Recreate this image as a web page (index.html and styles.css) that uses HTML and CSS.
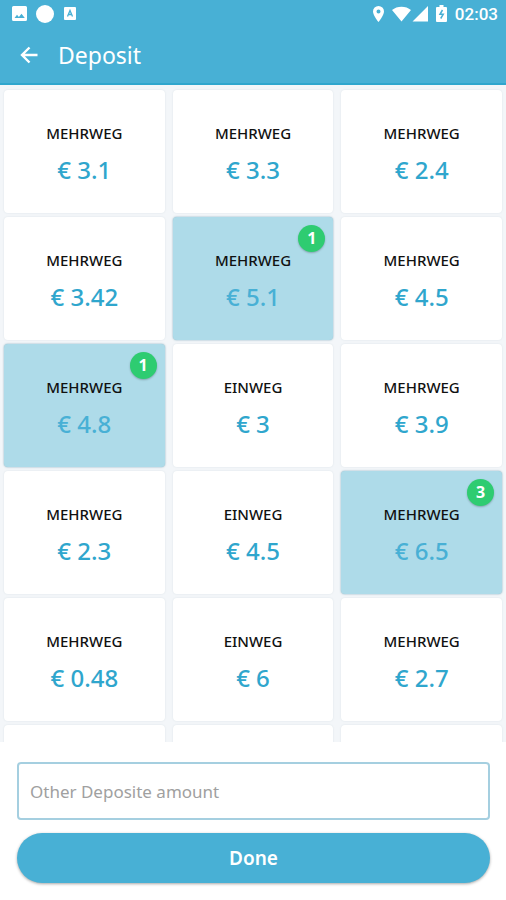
FILE: index.html
```html
<!DOCTYPE html>
<html lang="en">
  <head>
    <meta charset="UTF-8" />
    <meta name="viewport" content="width=device-width, initial-scale=1.0" />
    <title>Deposit</title>
    <link rel="stylesheet" href="styles.css">
  </head>
  <body>
    <header class="top">
      <!-- Phone status bar -->
      <div class="status">
        <div class="status-left">
          <svg width="15" height="15" viewBox="0 0 15 15" aria-hidden="true">
            <path fill="#fff" fill-rule="evenodd" d="M1.500 0h12A1.500 1.500 0 0 1 15 1.500v12a1.500 1.500 0 0 1-1.500 1.500h-12A1.500 1.500 0 0 1 0 13.500v-12A1.500 1.500 0 0 1 1.500 0zM2.500 12h10.300L9.500 7.700 6.900 10.900 5 8.800z" />
          </svg>
          <svg width="18" height="18" viewBox="0 0 18 18" aria-hidden="true">
            <circle cx="9" cy="9" r="9" fill="#fff" />
          </svg>
          <svg class="app-icon" width="12" height="13" viewBox="0 0 12 13" aria-hidden="true">
            <rect width="12" height="13" rx="1" fill="#fff" />
            <path d="M3.500 9.500 6 3.500l2.500 6M4.500 7.500h3" fill="none" stroke="#48b0d5" stroke-width="1.300" />
          </svg>
        </div>
        <div class="status-right">
          <svg width="11" height="16" viewBox="0 0 11 16" aria-hidden="true">
            <path fill="#fff" fill-rule="evenodd" d="M5.500 0A5.500 5.500 0 0 1 11 5.500C11 9.500 5.500 16 5.500 16S0 9.500 0 5.500A5.500 5.500 0 0 1 5.500 0zm0 3.500a2 2 0 1 0 0 4 2 2 0 0 0 0-4z" />
          </svg>
          <svg width="36" height="16" viewBox="0 0 36 16" aria-hidden="true">
            <path fill="#fff" d="M0 4C5-.5 14-.5 19 4L9.500 15.500zM36 0v15.500H20.500z" />
          </svg>
          <svg width="11" height="17" viewBox="0 0 11 17" aria-hidden="true">
            <path fill="#fff" d="M3.500 0h4v2H10a1 1 0 0 1 1 1v13a1 1 0 0 1-1 1H1a1 1 0 0 1-1-1V3a1 1 0 0 1 1-1h2.500z" />
            <path fill="none" stroke="#48b0d5" stroke-width="1.500" d="M6.500 5 4 9.300h3.200L4.700 13.500" />
          </svg>
          <time>02:03</time>
        </div>
      </div>
      <!-- App bar -->
      <div class="app-bar">
        <button type="button" class="back" aria-label="Back">
          <svg width="18" height="18" viewBox="0 0 18 18" aria-hidden="true">
            <path fill="none" stroke="#fff" stroke-width="2.400" d="M17.500 9H2.500M9.500 1.500 2 9l7.500 7.500" />
          </svg>
        </button>
        <h1>Deposit</h1>
      </div>
    </header>

    <main class="deposits">
      <button type="button" class="card"><span class="kind">MEHRWEG</span><span class="price">€ 3.1</span></button>
      <button type="button" class="card"><span class="kind">MEHRWEG</span><span class="price">€ 3.3</span></button>
      <button type="button" class="card"><span class="kind">MEHRWEG</span><span class="price">€ 2.4</span></button>

      <button type="button" class="card"><span class="kind">MEHRWEG</span><span class="price">€ 3.42</span></button>
      <button type="button" class="card selected"><span class="kind">MEHRWEG</span><span class="price">€ 5.1</span><span class="badge">1</span></button>
      <button type="button" class="card"><span class="kind">MEHRWEG</span><span class="price">€ 4.5</span></button>

      <button type="button" class="card selected"><span class="kind">MEHRWEG</span><span class="price">€ 4.8</span><span class="badge">1</span></button>
      <button type="button" class="card"><span class="kind">EINWEG</span><span class="price">€ 3</span></button>
      <button type="button" class="card"><span class="kind">MEHRWEG</span><span class="price">€ 3.9</span></button>

      <button type="button" class="card"><span class="kind">MEHRWEG</span><span class="price">€ 2.3</span></button>
      <button type="button" class="card"><span class="kind">EINWEG</span><span class="price">€ 4.5</span></button>
      <button type="button" class="card selected"><span class="kind">MEHRWEG</span><span class="price">€ 6.5</span><span class="badge">3</span></button>

      <button type="button" class="card"><span class="kind">MEHRWEG</span><span class="price">€ 0.48</span></button>
      <button type="button" class="card"><span class="kind">EINWEG</span><span class="price">€ 6</span></button>
      <button type="button" class="card"><span class="kind">MEHRWEG</span><span class="price">€ 2.7</span></button>

      <div class="card"></div>
      <div class="card"></div>
      <div class="card"></div>
    </main>

    <form class="footer" autocomplete="off">
      <input type="text" id="amount" name="amount" aria-label="Other Deposite amount" placeholder="Other Deposite amount" />
      <button type="submit" class="done">Done</button>
    </form>
  </body>
</html>
```
FILE: styles.css
```css
* {
  box-sizing: border-box;
}
body {
  margin: 0;
  height: 100vh;
  display: flex;
  flex-direction: column;
  background: #fff;
  font-family: "Noto Sans", "Open Sans", sans-serif;
}
button,
input {
  font-family: inherit;
}
svg {
  display: block;
}

/* Header */
.top {
  background: #48b0d5;
  color: #fff;
  border-bottom: 2px solid #2fa6cd;
}
.status {
  display: flex;
  justify-content: space-between;
  align-items: center;
  height: 27px;
  padding: 0 8px 0 12px;
}
.status-left,
.status-right {
  display: flex;
  align-items: center;
  gap: 9px;
}
.app-icon {
  margin-left: 1px;
}
.status-right {
  gap: 8px;
}
.status time {
  font-family: Roboto, sans-serif;
  font-size: 17px;
  font-weight: 500;
  line-height: 24px;
}
.app-bar {
  display: flex;
  align-items: center;
  gap: 20px;
  height: 56px;
  padding: 0 20px;
}
.back {
  padding: 0;
  border: none;
  background: none;
  cursor: pointer;
}
.app-bar h1 {
  margin: 0;
  font-size: 23px;
  font-weight: 400;
}

/* Deposit cards */
.deposits {
  flex: 1;
  min-height: 0;
  overflow-y: auto;
  scrollbar-width: none;
  display: grid;
  grid-template-columns: repeat(3, 1fr);
  grid-auto-rows: 123px;
  gap: 4px 8px;
  padding: 5px 4px 0;
  background: #f3f6f9;
}
.card {
  position: relative;
  display: flex;
  flex-direction: column;
  align-items: center;
  justify-content: center;
  gap: 9px;
  padding: 8px 0 0;
  border: none;
  border-radius: 4px;
  background: #fff;
  box-shadow: 0 0 2px rgba(60, 90, 110, 0.12);
}
button.card {
  cursor: pointer;
}
.kind {
  color: #111;
  font-size: 15px;
  font-weight: 500;
  line-height: 20px;
}
.price {
  color: #2fa6cd;
  font-size: 24px;
  font-weight: 500;
  line-height: 36px;
}
.selected {
  background: #aedbe9;
  box-shadow: 0 0 2px rgba(40, 110, 140, 0.6);
}
.selected .price {
  color: #48b0d5;
}
.badge {
  position: absolute;
  top: 8px;
  right: 8px;
  width: 27px;
  height: 27px;
  border-radius: 50%;
  background: #2ecc71;
  box-shadow: 0 1px 2px rgba(0, 0, 0, 0.25);
  color: #fff;
  font-size: 16px;
  font-weight: 700;
  line-height: 27px;
  text-align: center;
}

/* Amount form */
.footer {
  display: flex;
  flex-direction: column;
  gap: 13px;
  padding: 20px 16px 17px 17px;
}
.footer input {
  height: 58px;
  padding: 0 11px;
  border: 2px solid #a5cfe0;
  border-radius: 4px;
  background: #fff;
  font-size: 17px;
  outline: none;
}
.footer input::placeholder {
  color: #a0a0a0;
}
.footer input:focus {
  border-color: #48b0d5;
}
.done {
  height: 50px;
  border: none;
  border-radius: 25px;
  background: #48b0d5;
  box-shadow: 0 1px 3px rgba(0, 0, 0, 0.35);
  color: #fff;
  font-size: 19px;
  font-weight: 600;
  cursor: pointer;
}
```
